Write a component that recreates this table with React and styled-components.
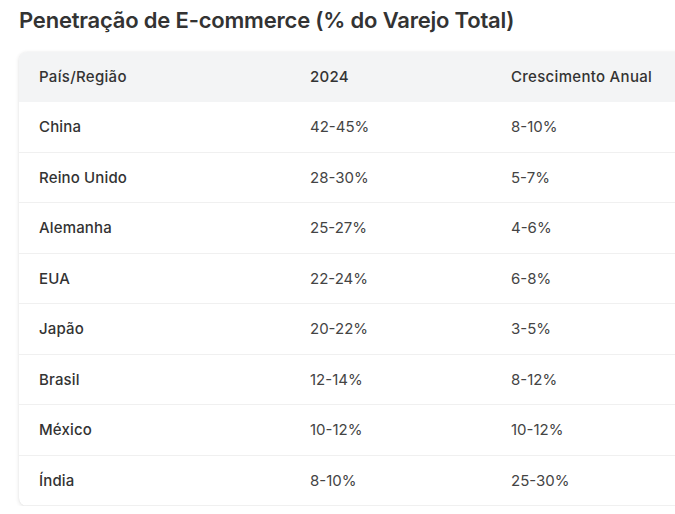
import React from "react";
import styled, { createGlobalStyle } from "styled-components";

const Global = createGlobalStyle`
  html, body { margin: 0; padding: 0; background: #ffffff; overflow: hidden; }
  body { font-family: Inter, "Noto Sans", sans-serif; color: #333; }
`;

const Page = styled.div`
  padding: 5px 0 0 19px;
  width: 720px;
`;

const Title = styled.h2`
  margin: 0 0 17px 0;
  font-size: 22px;
  line-height: 30px;
  font-weight: 600;
  color: #333;
  letter-spacing: -0.2px;
`;

const Card = styled.div`
  width: 690px;
  border-radius: 8px;
  overflow: hidden;
  background: #fff;
  box-shadow: 0 1px 4px rgba(0, 0, 0, 0.12), 0 0 1px rgba(0, 0, 0, 0.08);
`;

const Table = styled.table`
  width: 100%;
  border-collapse: collapse;
  font-size: 15px;
  table-layout: fixed;
`;

const HeadRow = styled.tr`
  background: #f3f4f5;
`;

const Th = styled.th`
  box-sizing: border-box;
  text-align: left;
  font-weight: 500;
  color: #333;
  padding: 14px 20px;
  line-height: 22px;
  letter-spacing: 0.3px;
  white-space: nowrap;
  width: ${(p) => p.$w || "auto"};
`;

const Row = styled.tr`
  border-bottom: 1px solid #f0f0f0;
`;

const Td = styled.td`
  box-sizing: border-box;
  padding: 14px 20px;
  line-height: 21.5px;
  white-space: nowrap;
  letter-spacing: ${(p) => (p.$strong ? "0.15px" : "0")};
  font-weight: ${(p) => (p.$strong ? 500 : 400)};
  color: ${(p) => (p.$strong ? "#333" : "#444")};
`;

const data = [
  ["China", "42-45%", "8-10%"],
  ["Reino Unido", "28-30%", "5-7%"],
  ["Alemanha", "25-27%", "4-6%"],
  ["EUA", "22-24%", "6-8%"],
  ["Japão", "20-22%", "3-5%"],
  ["Brasil", "12-14%", "8-12%"],
  ["México", "10-12%", "10-12%"],
  ["Índia", "8-10%", "25-30%"],
];

export default function App() {
  return (
    <>
      <Global />
      <Page>
        <Title>Penetração de E-commerce (% do Varejo Total)</Title>
        <Card>
          <Table>
            <thead>
              <HeadRow>
                <Th $w="271px">País/Região</Th>
                <Th $w="201px">2024</Th>
                <Th>Crescimento Anual</Th>
              </HeadRow>
            </thead>
            <tbody>
              {data.map((r) => (
                <Row key={r[0]}>
                  <Td $strong>{r[0]}</Td>
                  <Td>{r[1]}</Td>
                  <Td>{r[2]}</Td>
                </Row>
              ))}
            </tbody>
          </Table>
        </Card>
      </Page>
    </>
  );
}
